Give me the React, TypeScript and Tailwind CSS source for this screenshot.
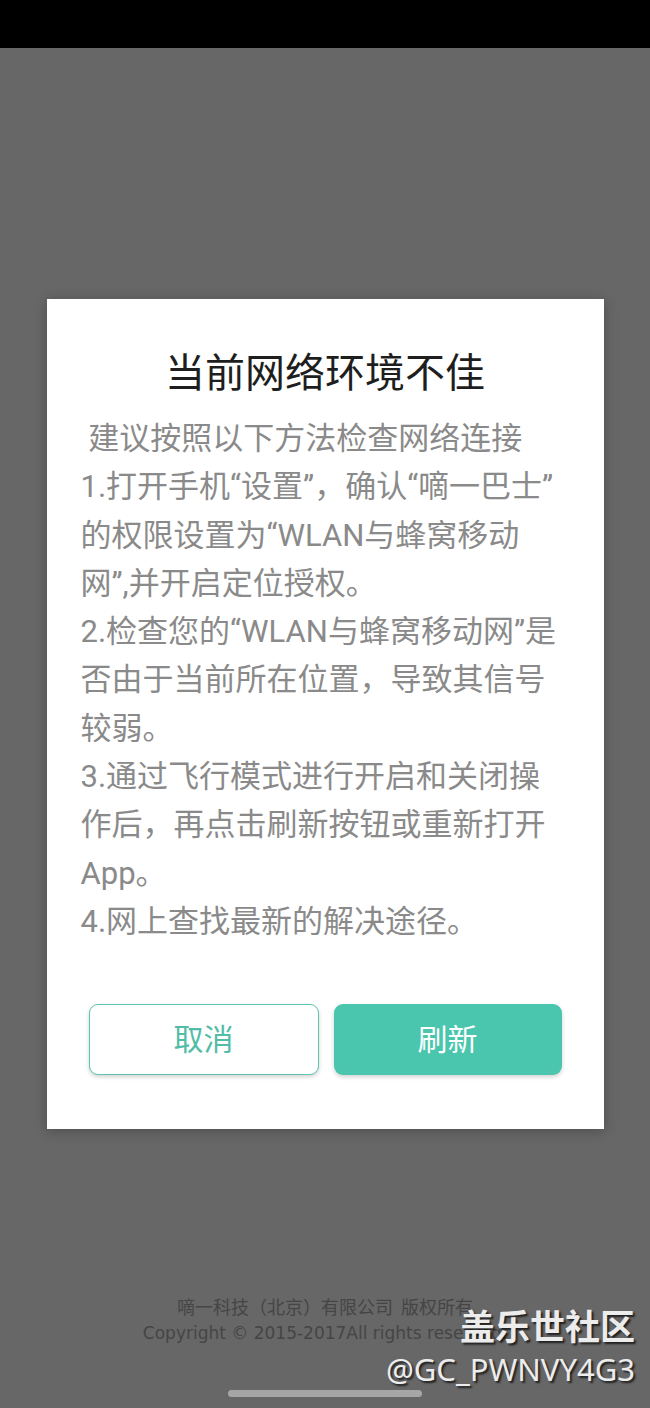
import React from 'react';

const BODY_LINES = [
  ' 建议按照以下方法检查网络连接',
  '1.打开手机“设置”，确认“嘀一巴士”',
  '的权限设置为“WLAN与蜂窝移动',
  '网”,并开启定位授权。',
  '2.检查您的“WLAN与蜂窝移动网”是',
  '否由于当前所在位置，导致其信号',
  '较弱。',
  '3.通过飞行模式进行开启和关闭操',
  '作后，再点击刷新按钮或重新打开',
  'App。',
  '4.网上查找最新的解决途径。',
];

export default function App() {
  return (
    <div className="relative flex h-[1408px] w-[650px] flex-col overflow-hidden bg-[#676767] font-['Roboto','Noto_Sans_CJK_SC',sans-serif]">
      {/* status bar */}
      <div className="h-[48px] w-full shrink-0 bg-black" />

      {/* dialog */}
      <div className="mx-auto mt-[251px] flex h-[830px] w-[557px] flex-col bg-white px-[34px] pt-[51px] shadow-[0_2px_12px_rgba(0,0,0,0.25)]">
        <h1 className="text-center text-[40px] leading-[48px] font-normal text-[#1e1e1e]">当前网络环境不佳</h1>
        <div className="mt-[17px] text-[31px] leading-[48.3px] whitespace-pre text-[#8a8a8a]">
          {BODY_LINES.map((line, i) => (
            <div key={i}>{line}</div>
          ))}
        </div>
        <div className="mt-auto mb-[54px] flex gap-[15px] px-[8px]">
          <button className="flex h-[71px] flex-1 items-center justify-center rounded-[9px] border-[1.5px] border-[#5cc4b1] bg-white text-[30px] text-[#52bca7] shadow-[0_2px_4px_rgba(0,0,0,0.18)]">
            取消
          </button>
          <button className="flex h-[71px] flex-1 items-center justify-center rounded-[9px] bg-[#4ac5ae] text-[30px] text-white shadow-[0_2px_4px_rgba(0,0,0,0.18)]">
            刷新
          </button>
        </div>
      </div>

      {/* footer */}
      <div className="mt-[164px] flex flex-col items-center leading-[27px] text-[#454545]">
        <div className="text-[18px] font-['Noto_Sans_CJK_SC',sans-serif]">嘀一科技（北京）有限公司&nbsp;&nbsp;版权所有</div>
        <div className="text-[17px] font-['DejaVu_Sans',sans-serif]">Copyright © 2015-2017All rights reserved.</div>
      </div>

      {/* home indicator */}
      <div className="mx-auto mt-[43px] h-[7px] w-[194px] rounded-full bg-[#a6a6a6]" />

      {/* watermark */}
      <div className="absolute right-[15px] top-[1303px] flex flex-col items-end text-[#ececec] [text-shadow:2px_2px_2px_rgba(0,0,0,0.7)]">
        <div className="text-[35px] leading-[44px] font-bold font-['Noto_Sans_CJK_SC',sans-serif]">盖乐世社区</div>
        <div className="text-[31px] leading-[44px] font-['Noto_Sans',sans-serif]">@GC_PWNVY4G3</div>
      </div>
    </div>
  );
}
